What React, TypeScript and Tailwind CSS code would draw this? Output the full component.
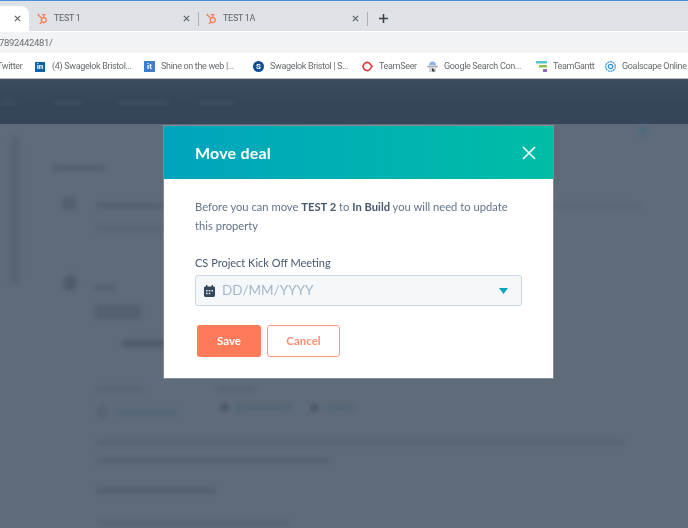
import React from "react";

const Hub = () => (
  <svg width="11" height="11" viewBox="0 0 13 13" fill="none" stroke="#f5825c" strokeWidth="1.6" className="shrink-0">
    <circle cx="8" cy="8.4" r="2.9" />
    <path d="M8 5.4V2.4M6.4 2h3.2M5.8 6.4 1.8 2.8M5.9 10.5l-2 1.9" strokeLinecap="round" />
    <circle cx="1.6" cy="2" r="1.1" fill="#f5825c" stroke="none" />
  </svg>
);

const TabX = () => (
  <svg width="7" height="7" viewBox="0 0 8 8" stroke="#5f6368" strokeWidth="1.4" className="shrink-0">
    <path d="M1 1l6 6M7 1 1 7" />
  </svg>
);

const Tab = ({ label }: { label: string }) => (
  <div className="flex h-full w-[169px] items-center pl-[1px] pr-[6px]">
    <Hub />
    <span className="ml-[6px] flex-1 text-[9px] tracking-[-0.3px] text-[#5f6368]">{label}</span>
    <TabX />
    <div className="ml-[8px] h-[14px] w-px bg-[#aeb1b6]" />
  </div>
);

const Mark = ({ icon, label, w }: { icon: React.ReactNode; label: string; w: string }) => (
  <div className={`flex shrink-0 items-center ${w}`}>
    <span className="flex w-[17px] shrink-0 items-center">{icon}</span>
    <span className="whitespace-nowrap text-[9px] tracking-[-0.33px] text-[#666a6e]">{label}</span>
  </div>
);

const Bar = ({ className }: { className: string }) => <div className={`rounded-sm blur-[2px] ${className}`} />;

export default function App() {
  return (
    <div
      className="relative h-[528px] w-[688px] overflow-hidden bg-[#5f6b79] blur-[0.3px]"
      style={{ fontFamily: '"Lato", "Noto Sans", sans-serif' }}
    >
      {/* browser chrome */}
      <div className="h-[1px] bg-[#4a90d9]" />
      <div className="flex h-[30px] items-end bg-[#dee1e6] pt-[5px]" style={{ fontFamily: 'Roboto, sans-serif' }}>
        <div className="flex h-full w-[29px] items-center justify-end rounded-tr-lg bg-white pr-[8px]">
          <TabX />
        </div>
        <div className="ml-[7px] flex h-full items-center">
          <Tab label="TEST 1" />
          <Tab label="TEST 1A" />
          <svg width="9" height="9" viewBox="0 0 10 10" stroke="#3c4043" strokeWidth="1.7" className="ml-[5px]">
            <path d="M5 0v10M0 5h10" />
          </svg>
        </div>
      </div>
      <div className="h-[1px] bg-white" />
      <div
        className="flex h-[21px] items-center bg-[#f1f3f4] pt-[2px] text-[9.5px] tracking-[-0.35px] text-[#6b6e72]"
        style={{ fontFamily: 'Roboto, sans-serif' }}
      >
        <span className="ml-[-1px]">7892442481/</span>
      </div>
      <div
        className="flex h-[26px] items-center overflow-hidden border-b border-[#b9bbbe] bg-white pt-[2px]"
        style={{ fontFamily: 'Roboto, sans-serif' }}
      >
        <span className="ml-[-3px] w-[38px] shrink-0 text-[9px] tracking-[-0.33px] text-[#666a6e]">Twitter</span>
        <Mark
          w="w-[109px]"
          label="(4) Swagelok Bristol..."
          icon={<span className="flex h-[10px] w-[10px] items-center justify-center bg-[#0a66a8] text-[8px] font-bold leading-none text-white">in</span>}
        />
        <Mark
          w="w-[109px]"
          label="Shine on the web |..."
          icon={<span className="flex h-[11px] w-[11px] items-center justify-center bg-[#3f7fc9] text-[8px] font-bold leading-none text-white">it</span>}
        />
        <Mark
          w="w-[109px]"
          label="Swagelok Bristol | S..."
          icon={<span className="flex h-[11px] w-[11px] items-center justify-center rounded-full bg-[#0f4f97] text-[8px] font-bold leading-none text-white">S</span>}
        />
        <Mark
          w="w-[65px]"
          label="TeamSeer"
          icon={
            <svg width="11" height="11" viewBox="0 0 11 11" fill="none" stroke="#e23b3b" strokeWidth="1.6">
              <path d="M10 5.5 7.5 2.2A4 4 0 1 0 7.5 8.8z" strokeLinejoin="round" />
            </svg>
          }
        />
        <Mark
          w="w-[109px]"
          label="Google Search Con..."
          icon={
            <svg width="11" height="12" viewBox="0 0 11 12">
              <path d="M2 4a3.5 3.5 0 0 1 7 0z" fill="#8fb6e8" />
              <rect x="0.5" y="4.5" width="10" height="2" fill="#a7adb5" />
              <rect x="2" y="7" width="7" height="4" fill="#cfd3d8" />
              <path d="M5 7l3 2.5-1.2.2.6 1.3-.7.3-.6-1.3-1 .8z" fill="#333" />
            </svg>
          }
        />
        <Mark
          w="w-[69px]"
          label="TeamGantt"
          icon={
            <svg width="11" height="11" viewBox="0 0 11 11">
              <rect x="0" y="0" width="11" height="2.5" fill="#57c4c9" />
              <rect x="3" y="4" width="8" height="2.5" fill="#8cc152" />
              <rect x="7" y="8" width="4" height="3" fill="#8e6bb0" />
            </svg>
          }
        />
        <Mark
          w="w-[83px]"
          label="Goalscape Online"
          icon={
            <svg width="11" height="11" viewBox="0 0 11 11" fill="none" stroke="#2b8fd8" strokeWidth="1.2">
              <circle cx="5.5" cy="5.5" r="4.8" strokeDasharray="2 0.7" />
              <circle cx="5.5" cy="5.5" r="2.2" />
            </svg>
          }
        />
      </div>

      {/* blurred hub nav */}
      <div className="flex h-[45px] items-center bg-gradient-to-b from-[#3d4c5e] via-[#35465a] to-[#35465a]">
        <Bar className="h-[4px] w-[16px] bg-[#404f63]" />
        <Bar className="ml-[38px] h-[4px] w-[30px] bg-[#404f63]" />
        <Bar className="ml-[33px] h-[4px] w-[52px] bg-[#404f63]" />
        <Bar className="ml-[30px] h-[4px] w-[36px] bg-[#404f63]" />
      </div>

      {/* blurred page behind */}
      <div className="relative flex">
        <div className="ml-[10px] mt-[13px] h-[147px] w-[10px] rounded bg-[#586473] blur-[2px]" />
        <div className="ml-[32px] flex-1">
          <Bar className="mt-[41px] h-[6px] w-[53px] bg-[#535f6e]" />
          <div className="mt-[26px] flex">
            <Bar className="ml-[10px] h-[13px] w-[14px] bg-[#535f6e]" />
            <div className="ml-[19px]">
              <Bar className="mt-[6px] h-[5px] w-[70px] bg-[#535f6e]" />
              <Bar className="mt-[18px] h-[5px] w-[70px] bg-[#586473]" />
            </div>
            <Bar className="ml-[388px] mt-[7px] h-[4px] w-[88px] bg-[#5a6675]" />
          </div>
          <div className="mt-[44px] flex">
            <div className="ml-[11px] h-[16px] w-[14px] rounded-full bg-[#505c6b] blur-[2px]" />
            <div className="ml-[18px]">
              <Bar className="mt-[10px] h-[5px] w-[20px] bg-[#555f6e]" />
              <Bar className="mt-[15px] h-[14px] w-[46px] rounded-full bg-[#555f6e]" />
              <Bar className="ml-[27px] mt-[21px] h-[7px] w-[60px] bg-[#4f5b6a]" />
              <div className="mt-[40px] flex">
                <div className="w-[122px]">
                  <Bar className="h-[5px] w-[48px] bg-[#586473]" />
                  <div className="mt-[13px] flex items-center">
                    <div className="ml-[2px] h-[14px] w-[11px] rounded-full bg-[#586473] blur-[2px]" />
                    <Bar className="ml-[10px] h-[5px] w-[60px] bg-[#516677]" />
                  </div>
                </div>
                <div>
                  <Bar className="h-[4px] w-[38px] bg-[#586473]" />
                  <div className="mt-[12px] flex items-center">
                    <div className="ml-[3px] h-[9px] w-[9px] rounded-full bg-[#505c6b] blur-[1.5px]" />
                    <Bar className="ml-[6px] h-[5px] w-[57px] bg-[#516677]" />
                    <div className="ml-[18px] h-[9px] w-[9px] rounded-full bg-[#505c6b] blur-[1.5px]" />
                    <Bar className="ml-[7px] h-[5px] w-[28px] bg-[#516677]" />
                  </div>
                </div>
              </div>
              <Bar className="mt-[21px] h-[5px] w-[530px] bg-[#566271]" />
              <Bar className="mt-[13px] h-[5px] w-[236px] bg-[#566271]" />
              <Bar className="mt-[25px] h-[5px] w-[122px] bg-[#535f6e]" />
              <Bar className="ml-[5px] mt-[27px] h-[5px] w-[190px] bg-[#586473]" />
            </div>
          </div>
        </div>
      </div>

      {/* teal dot */}
      <div className="absolute left-[638px] top-[126px] h-[10px] w-[10px] rounded-full bg-[#4f6b7c] blur-[2px]" />

      {/* dialog */}
      <div className="absolute left-[164px] top-[126px] h-[252px] w-[389px] bg-white shadow-[0_0_0_1px_rgba(200,205,212,0.35)]">
        <div className="flex h-[53px] items-center justify-between bg-gradient-to-r from-[#00a4bd] to-[#00bda5] pl-[31px] pr-[17px]">
          <span className="text-[16px] font-bold tracking-[0.2px] text-white">Move deal</span>
          <svg width="14" height="14" viewBox="0 0 14 14" stroke="#fff" strokeWidth="1.6">
            <path d="M1 1l12 12M13 1 1 13" />
          </svg>
        </div>
        <div className="px-[31px] pt-[18px]">
          <p className="whitespace-nowrap text-[11.2px] leading-[19px] text-[#627589]">
            Before you can move <b className="font-bold text-[#46596d]">TEST 2</b> to{" "}
            <b className="font-bold text-[#46596d]">In Build</b> you will need to update
            <br />
            this property
          </p>
          <div className="mt-[20px] text-[11px] leading-[16px] text-[#46596d]">CS Project Kick Off Meeting</div>
          <div className="mt-[4px] flex h-[31px] w-[327px] items-center rounded-[3px] border border-[#cbd6e2] bg-[#f5f8fa] pl-[8px] pr-[13px]">
            <svg width="11" height="12" viewBox="0 0 11 12" className="shrink-0">
              <path d="M2 0h1.4v1.4h4.2V0H9v1.4h.6A1.4 1.4 0 0 1 11 2.8v7.8A1.4 1.4 0 0 1 9.6 12H1.4A1.4 1.4 0 0 1 0 10.6V2.8A1.4 1.4 0 0 1 1.4 1.4H2z" fill="#33475b" />
              <path d="M2 5h1.6v1.4H2zM4.7 5h1.6v1.4H4.7zM7.4 5H9v1.4H7.4zM2 7.8h1.6v1.4H2zM4.7 7.8h1.6v1.4H4.7z" fill="#e6ebf0" />
            </svg>
            <span className="ml-[7px] flex-1 text-[13.5px] text-[#a4b6c9]">DD/MM/YYYY</span>
            <svg width="9" height="6" viewBox="0 0 9 6">
              <path d="M0 0h9L4.5 6z" fill="#00a4bd" />
            </svg>
          </div>
          <div className="ml-[2px] mt-[19px] flex gap-[6px]">
            <button className="flex h-[32px] w-[64px] items-center justify-center rounded-[3px] bg-[#ff7a59] text-[11.5px] font-bold text-[#fff]">
              Save
            </button>
            <button className="flex h-[32px] w-[73px] items-center justify-center rounded-[3px] border border-[#ff9b82] bg-white text-[11.5px] font-bold text-[#ff8f73]">
              Cancel
            </button>
          </div>
        </div>
      </div>
    </div>
  );
}
